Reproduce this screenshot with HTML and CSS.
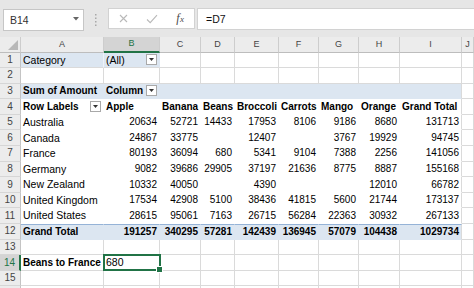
FILE: index.html
```html
<!DOCTYPE html>
<html>
<head>
<meta charset="utf-8">
<link rel="stylesheet" href="styles.css">
</head>
<body>
<div class="app">
  <div class="fbar">
    <div class="namebox"><span>B14</span><svg class="caret" width="6" height="4" viewBox="0 0 6 4"><path d="M0 0H6L3 3.5Z" fill="#666"/></svg></div>
    <div class="grip"><svg width="2" height="13" viewBox="0 0 2 13"><rect x="0" y="0" width="1.5" height="1.5" fill="#a8a8a8"/><rect x="0" y="3.5" width="1.5" height="1.5" fill="#a8a8a8"/><rect x="0" y="7" width="1.5" height="1.5" fill="#a8a8a8"/><rect x="0" y="10.5" width="1.5" height="1.5" fill="#a8a8a8"/></svg></div>
    <div class="btns">
      <span class="slot s1"><svg width="9" height="9" viewBox="0 0 9 9"><path d="M1 1L8 8M8 1L1 8" stroke="#b9b9b9" stroke-width="1.1" fill="none"/></svg></span>
      <span class="slot"><svg width="12" height="10" viewBox="0 0 12 10"><path d="M1 5.5L4.2 8.6L11 1.2" stroke="#b9b9b9" stroke-width="1.1" fill="none"/></svg></span>
      <span class="slot fx"><i class="f">f</i><i class="x">x</i></span>
    </div>
    <div class="formula">=D7</div>
  </div>
  <div class="sheet">
    <div class="r hd">
      <div class="corner"><svg width="10" height="10" viewBox="0 0 10 10"><path d="M10 0V10H0Z" fill="#b8b8b8"/></svg></div>
      <div>A</div><div class="csel">B</div><div>C</div><div>D</div><div>E</div><div>F</div><div>G</div><div>H</div><div>I</div><div>J</div>
    </div>
    <div class="r">
      <div class="h">1</div>
      <div class="q a1">Category</div>
      <div class="q"><span>(All)</span><span class="dd"><svg width="5" height="3" viewBox="0 0 5 3"><path d="M0 0H5L2.5 3Z" fill="#333"/></svg></span></div>
      <div></div><div></div><div></div><div></div><div></div><div></div><div></div><div></div>
    </div>
    <div class="r">
      <div class="h">2</div>
      <div></div><div></div><div></div><div></div><div></div><div></div><div></div><div></div><div></div><div></div>
    </div>
    <div class="r">
      <div class="h">3</div>
      <div class="q b">Sum of Amount</div>
      <div class="q b"><span>Column</span><span class="dd"><svg width="5" height="3" viewBox="0 0 5 3"><path d="M0 0H5L2.5 3Z" fill="#333"/></svg></span></div>
      <div class="q"></div><div class="q"></div><div class="q"></div><div class="q"></div><div class="q"></div><div class="q"></div><div class="q ri"></div>
      <div></div>
    </div>
    <div class="r">
      <div class="h">4</div>
      <div class="p b"><span>Row Labels</span><span class="dd"><svg width="5" height="3" viewBox="0 0 5 3"><path d="M0 0H5L2.5 3Z" fill="#333"/></svg></span></div>
      <div class="p b">Apple</div><div class="p b">Banana</div><div class="p b">Beans</div><div class="p b">Broccoli</div><div class="p b">Carrots</div><div class="p b">Mango</div><div class="p b">Orange</div><div class="p b ri">Grand Total</div>
      <div></div>
    </div>
    <div class="r">
      <div class="h">5</div>
      <div class="p">Australia</div>
      <div class="p n">20634</div><div class="p n">52721</div><div class="p n">14433</div><div class="p n">17953</div><div class="p n">8106</div><div class="p n">9186</div><div class="p n">8680</div><div class="p n ri">131713</div>
      <div></div>
    </div>
    <div class="r">
      <div class="h">6</div>
      <div class="p">Canada</div>
      <div class="p n">24867</div><div class="p n">33775</div><div class="p n"></div><div class="p n">12407</div><div class="p n"></div><div class="p n">3767</div><div class="p n">19929</div><div class="p n ri">94745</div>
      <div></div>
    </div>
    <div class="r">
      <div class="h">7</div>
      <div class="p">France</div>
      <div class="p n">80193</div><div class="p n">36094</div><div class="p n">680</div><div class="p n">5341</div><div class="p n">9104</div><div class="p n">7388</div><div class="p n">2256</div><div class="p n ri">141056</div>
      <div></div>
    </div>
    <div class="r">
      <div class="h">8</div>
      <div class="p">Germany</div>
      <div class="p n">9082</div><div class="p n">39686</div><div class="p n">29905</div><div class="p n">37197</div><div class="p n">21636</div><div class="p n">8775</div><div class="p n">8887</div><div class="p n ri">155168</div>
      <div></div>
    </div>
    <div class="r">
      <div class="h">9</div>
      <div class="p">New Zealand</div>
      <div class="p n">10332</div><div class="p n">40050</div><div class="p n"></div><div class="p n">4390</div><div class="p n"></div><div class="p n"></div><div class="p n">12010</div><div class="p n ri">66782</div>
      <div></div>
    </div>
    <div class="r">
      <div class="h">10</div>
      <div class="p">United Kingdom</div>
      <div class="p n">17534</div><div class="p n">42908</div><div class="p n">5100</div><div class="p n">38436</div><div class="p n">41815</div><div class="p n">5600</div><div class="p n">21744</div><div class="p n ri">173137</div>
      <div></div>
    </div>
    <div class="r">
      <div class="h">11</div>
      <div class="p">United States</div>
      <div class="p n">28615</div><div class="p n">95061</div><div class="p n">7163</div><div class="p n">26715</div><div class="p n">56284</div><div class="p n">22363</div><div class="p n">30932</div><div class="p n ri">267133</div>
      <div></div>
    </div>
    <div class="r">
      <div class="h">12</div>
      <div class="q b gt">Grand Total</div>
      <div class="q b n gt">191257</div><div class="q b n gt">340295</div><div class="q b n gt">57281</div><div class="q b n gt">142439</div><div class="q b n gt">136945</div><div class="q b n gt">57079</div><div class="q b n gt">104438</div><div class="q b n gt ri">1029734</div>
      <div></div>
    </div>
    <div class="r">
      <div class="h">13</div>
      <div></div><div></div><div></div><div></div><div></div><div></div><div></div><div></div><div></div><div></div>
    </div>
    <div class="r">
      <div class="h rsel">14</div>
      <div class="b">Beans to France</div>
      <div class="sel">680</div>
      <div></div><div></div><div></div><div></div><div></div><div></div><div></div><div></div>
    </div>
    <div class="r">
      <div class="h">15</div>
      <div></div><div></div><div></div><div></div><div></div><div></div><div></div><div></div><div></div><div></div>
    </div>
    <div class="r">
      <div class="h"></div>
      <div></div><div></div><div></div><div></div><div></div><div></div><div></div><div></div><div></div><div></div>
    </div>
  </div>
</div>
</body>
</html>
```

FILE: styles.css
```css
* {
  box-sizing: border-box;
  margin: 0;
  padding: 0;
}

html, body {
  width: 474px;
  height: 288px;
  overflow: hidden;
  background: #ffffff;
}

body {
  font-family: "Liberation Sans", Arial, sans-serif;
  color: #000;
}

.app {
  width: 474px;
  height: 288px;
  overflow: hidden;
  display: flex;
  flex-direction: column;
}

/* formula bar */
.fbar {
  height: 37px;
  flex: none;
  background: #e6e6e6;
  display: flex;
  align-items: flex-start;
  padding-left: 3px;
}

.namebox {
  margin-top: 9px;
  width: 81px;
  height: 22px;
  background: #fff;
  border: 1px solid #c6c6c6;
  display: flex;
  align-items: center;
  justify-content: space-between;
  padding: 0 4px 0 6px;
  font-size: 10.5px;
  color: #333;
}

.caret {
  margin-top: -3px;
}

.grip {
  width: 24px;
  height: 22px;
  margin-top: 9px;
  display: flex;
  align-items: center;
  justify-content: center;
}

.btns {
  margin-top: 8px;
  width: 87px;
  height: 21px;
  background: #fff;
  border: 1px solid #d2d2d2;
  display: flex;
  align-items: center;
}

.slot {
  width: 28px;
  height: 100%;
  display: flex;
  align-items: center;
  justify-content: center;
}

.slot.s1 {
  width: 30px;
}

.fx {
  font-family: "Liberation Serif", "Times New Roman", serif;
  color: #4a4a4a;
  align-items: baseline;
  padding-top: 2px;
}

.fx .f {
  font-size: 12px;
}

.fx .x {
  font-size: 9px;
  margin-left: 0.5px;
}

.formula {
  flex: 1;
  margin-top: 8px;
  margin-left: 2px;
  height: 22px;
  background: #fff;
  border: 1px solid #d2d2d2;
  border-right: none;
  display: flex;
  align-items: center;
  padding-left: 8px;
  font-size: 10.5px;
  color: #111;
}

/* sheet grid */
.sheet {
  flex: 1;
}

.r {
  display: grid;
  grid-template-columns: 21px 83px 56px 41px 34px 44px 40px 40px 41px 62px 1fr;
  height: 15.6px;
}

.r > div {
  border-right: 1px solid #dadada;
  border-bottom: 1px solid #dadada;
  display: flex;
  align-items: center;
  padding: 0 2px;
  font-size: 10.5px;
  line-height: 1;
  white-space: nowrap;
  overflow: hidden;
}

/* header row */
.r.hd {
  height: 15.5px;
}

.r.hd > div {
  background: #ececec;
  border-right: 1px solid #cdcdcd;
  border-bottom: 1px solid #bdbdbd;
  justify-content: center;
  font-size: 9px;
  color: #444;
}

.r.hd > .corner {
  justify-content: flex-end;
  align-items: flex-end;
  padding: 0 2px 2px 0;
}

.r.hd > .csel {
  background: #d4d4d4;
  color: #217346;
  border-bottom: 2px solid #217346;
}

/* row headers */
.r > .h {
  background: #ececec;
  border-right: 1px solid #c4c4c4;
  border-bottom: 1px solid #d6d6d6;
  justify-content: center;
  padding: 0;
  font-size: 10px;
  color: #444;
}

.r > .h.rsel {
  background: #d4d4d4;
  color: #217346;
  border-right: 2px solid #217346;
}

/* pivot table */
.r > .p {
  background: #fff;
  border-color: transparent;
}

.r > .q {
  background: #dce6f1;
  border-color: transparent;
}

.r > .q.a1 {
  border-right-color: #eef3f9;
  border-bottom-color: #dadada;
}

.r > .q:nth-child(3) {
  border-bottom-color: #dadada;
}

.r:nth-child(4) > .q:nth-child(3),
.r > .q.gt:nth-child(3) {
  border-bottom-color: transparent;
}

.r > .ri {
  border-right-color: #dadada;
}

.r > .gt {
  border-top: 1px solid #95b3d7;
}

.r > .n {
  justify-content: flex-end;
  font-size: 10px;
}

.r > .b {
  font-weight: bold;
  font-size: 10px;
}

.dd {
  margin-left: auto;
  width: 11px;
  height: 11px;
  flex: none;
  background: #fff;
  border: 1px solid #a9a9a9;
  display: flex;
  align-items: center;
  justify-content: center;
}

/* selected cell */
.r > .sel {
  position: relative;
  overflow: visible;
  z-index: 2;
}

.r > .sel::after {
  content: "";
  position: absolute;
  left: -1px;
  top: -1px;
  right: -2px;
  bottom: -1px;
  border: 2px solid #217346;
}

.r > .sel::before {
  content: "";
  position: absolute;
  right: -4px;
  bottom: -3px;
  width: 5px;
  height: 5px;
  background: #217346;
  border: 1px solid #fff;
  z-index: 1;
}
```
